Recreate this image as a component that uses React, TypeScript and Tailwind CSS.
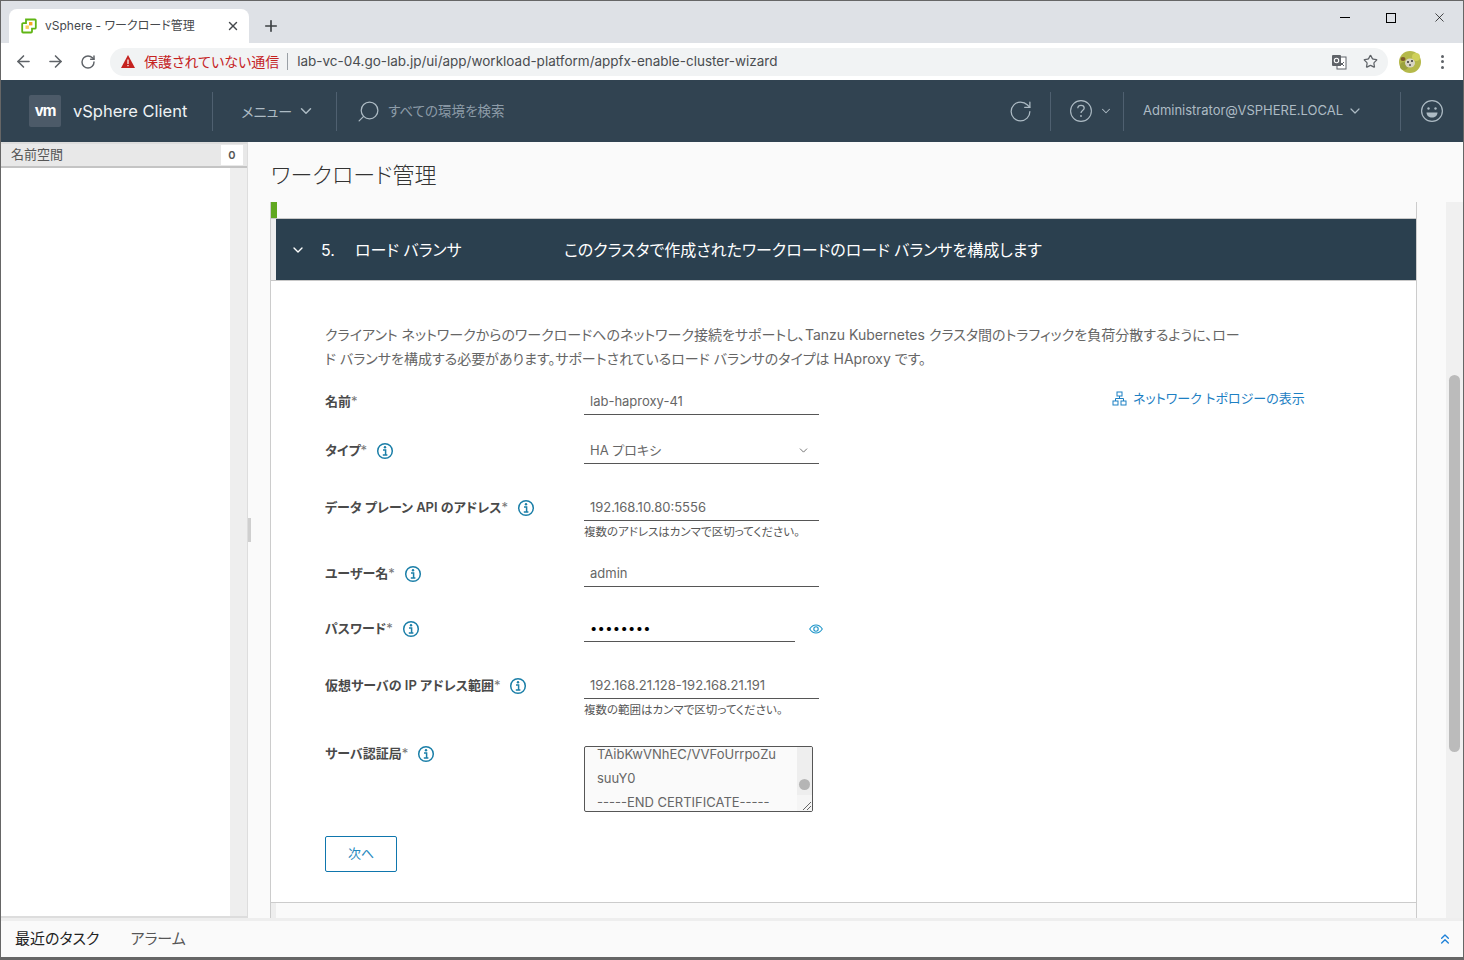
import React from 'react';
import { ArrowLeft, ArrowRight, ChevronDown, ChevronsUp, Plus, RotateCw, Search, Star, X } from 'lucide-react';

const FONT = "[font-family:Inter,'Noto_Sans_CJK_JP',sans-serif] [font-feature-settings:'palt']";

const InfoIcon = () => (
  <svg width="18" height="18" viewBox="0 0 18 18" fill="none" className="shrink-0">
    <circle cx="9" cy="9" r="7.3" stroke="#1b7fa8" strokeWidth="1.5" />
    <circle cx="9" cy="5.3" r="1.2" fill="#1b7fa8" />
    <path d="M7 8h2.6v4.6M6.8 13h4.6" stroke="#1b7fa8" strokeWidth="1.5" />
  </svg>
);

const Favicon = () => (
  <svg width="16" height="16" viewBox="0 0 16 16" fill="none" className="shrink-0">
    <path d="M5 1.5h9a.8.8 0 0 1 .8.8v7.4a1 1 0 0 1-1 1H11v2.8a1 1 0 0 1-1 1H2a.8.8 0 0 1-.8-.8V6.2a1 1 0 0 1 1-1H5V1.5z" stroke="#60b515" strokeWidth="1.8" />
    <rect x="8" y="4" width="3.4" height="3.4" fill="#f5a623" />
    <rect x="4.5" y="7.5" width="3.4" height="3.4" fill="#f8cf5b" />
  </svg>
);

const Avatar = () => (
  <svg width="22" height="22" viewBox="0 0 22 22">
    <circle cx="11" cy="11" r="11" fill="#b5b94a" />
    <circle cx="17" cy="6" r="4" fill="#cfd05a" />
    <circle cx="5" cy="15" r="4" fill="#9aa23e" />
    <ellipse cx="4" cy="8" rx="2.5" ry="2" fill="#7d5a2c" />
    <ellipse cx="11" cy="12" rx="5" ry="4.5" fill="#d8d5c4" />
    <circle cx="9" cy="11" r="1" fill="#333" />
    <circle cx="13" cy="10" r="1" fill="#333" />
    <circle cx="11" cy="14" r="1" fill="#555" />
  </svg>
);

const TranslateIcon = () => (
  <svg width="16" height="16" viewBox="0 0 16 16" className="shrink-0">
    <rect x="6" y="3" width="9" height="12" fill="#fff" stroke="#5f6368" />
    <rect x="1" y="1" width="9" height="11" rx="1" fill="#5f6368" />
    <circle cx="5.5" cy="6.5" r="2.2" fill="none" stroke="#fff" strokeWidth="1.1" />
    <path d="M9 8l4 4M13 8l-4 4" stroke="#5f6368" strokeWidth="1" />
  </svg>
);

const TopologyIcon = () => (
  <svg width="15" height="15" viewBox="0 0 15 15" fill="none" stroke="#1d80c3" className="shrink-0">
    <rect x="5" y="1" width="5" height="4" />
    <rect x="1" y="10" width="5" height="4" />
    <rect x="9" y="10" width="5" height="4" />
    <path d="M7.5 5v2.5M3.5 10V7.5h8V10" />
  </svg>
);

const EyeIcon = () => (
  <svg width="14" height="10" viewBox="0 0 14 10" fill="none" stroke="#1d95c9" strokeWidth="1.1">
    <path d="M.7 5C2.3 2.4 4.5 1 7 1s4.7 1.4 6.3 4C11.7 7.6 9.5 9 7 9S2.3 7.6.7 5z" />
    <circle cx="7" cy="5" r="2.2" />
  </svg>
);

const Label = ({ text, info, width }: { text: string; info?: boolean; width?: string }) => (
  <div className={`flex w-[259px] shrink-0 items-center gap-[9px] text-[13px] font-semibold text-[#4a4a4a] ${width ?? ''}`}>
    <span>
      {text}
      <span className="font-normal text-[#777]">*</span>
    </span>
    {info && <InfoIcon />}
  </div>
);

const Field = ({ value, help }: { value: string; help?: string }) => (
  <div className="w-[235px] shrink-0">
    <div className="flex h-[26px] items-center border-b border-[#565656] pl-[6px] text-[13px] text-[#666]">{value}</div>
    {help && <div className="mt-[4px] text-[11.5px] leading-[14px] text-[#565656]">{help}</div>}
  </div>
);

export default function App() {
  return (
    <div className={`flex h-[960px] w-[1464px] flex-col overflow-hidden border-x border-t border-[#666] bg-white ${FONT}`}>
      {/* browser tabs */}
      <div className="flex h-[42px] shrink-0 items-end bg-[#dee1e6] pl-[8px]">
        <div className="flex h-[34px] w-[240px] items-center rounded-t-[8px] bg-white pl-[12px] pr-[9px]">
          <Favicon />
          <span className="ml-[8px] flex-1 text-[12px] text-[#45484c]">vSphere - ワークロード管理</span>
          <X size={14} strokeWidth={2.4} className="text-[#45484c]" />
        </div>
        <Plus size={18} strokeWidth={2.2} className="mb-[8px] ml-[13px] text-[#3c4043]" />
        <div className="flex-1" />
        <div className="mb-[18px] flex items-center gap-[31px] pr-[16px]">
          <div className="h-px w-[10px] bg-black" />
          <div className="mx-[5px] h-[10px] w-[10px] border border-black" />
          <X size={15} strokeWidth={1.1} className="text-black" />
        </div>
      </div>

      {/* address bar */}
      <div className="flex h-[37px] shrink-0 items-center bg-white pl-[13px]">
        <ArrowLeft size={19} strokeWidth={2} className="text-[#5f6368]" />
        <ArrowRight size={19} strokeWidth={2} className="ml-[13px] text-[#5f6368]" />
        <RotateCw size={16} strokeWidth={2.2} className="ml-[15px] text-[#5f6368]" />
        <div className="ml-[14px] flex h-[28px] w-[1278px] items-center rounded-full bg-[#f1f3f4] pl-[11px] pr-[10px] text-[14px]">
          <svg width="14" height="13" viewBox="0 0 14 13" className="shrink-0">
            <path d="M7 0l7 13H0z" fill="#c5221f" />
            <path d="M6.4 4.5h1.2v4.5H6.4zM6.4 10h1.2v1.2H6.4z" fill="#fff" />
          </svg>
          <span className="ml-[9px] text-[#c5221f]">保護されていない通信</span>
          <div className="ml-[8px] h-[17px] w-px bg-[#9aa0a6]" />
          <span className="ml-[9px] text-[13.5px] text-[#4a4d50]">lab-vc-04.go-lab.jp/ui/app/workload-platform/appfx-enable-cluster-wizard</span>
          <div className="flex-1" />
          <TranslateIcon />
          <Star size={15} strokeWidth={2} className="ml-[16px] mr-[0px] text-[#5f6368]" />
        </div>
        <div className="ml-[11px]">
          <Avatar />
        </div>
        <div className="ml-[20px] flex flex-col gap-[2.5px]">
          <div className="h-[3px] w-[3px] rounded-full bg-[#5f6368]" />
          <div className="h-[3px] w-[3px] rounded-full bg-[#5f6368]" />
          <div className="h-[3px] w-[3px] rounded-full bg-[#5f6368]" />
        </div>
      </div>

      {/* vSphere header */}
      <div className="flex h-[62px] shrink-0 items-center bg-[#314351] pl-[28px] text-[#adbbc4]">
        <div className="flex h-[32px] w-[32px] items-center justify-center rounded-[2px] bg-[#4c5a68] text-[15px] font-bold tracking-[-1px] text-white">vm</div>
        <span className="ml-[12px] text-[16.5px] text-[#eef2f4]">vSphere Client</span>
        <div className="ml-[25px] h-[39px] w-px bg-[#4f6070]" />
        <span className="ml-[28px] text-[14px]">メニュー</span>
        <ChevronDown size={18} strokeWidth={2} className="ml-[5px]" />
        <div className="ml-[21px] h-[39px] w-px bg-[#4f6070]" />
        <Search size={25} strokeWidth={1.2} className="ml-[19px] -scale-x-100" />
        <span className="ml-[7px] text-[13.5px] text-[#8d9ca8]">すべての環境を検索</span>
        <div className="flex-1" />
        <RotateCw size={25} strokeWidth={1.2} />
        <div className="ml-[17px] h-[39px] w-px bg-[#4f6070]" />
        <svg width="24" height="24" viewBox="0 0 24 24" fill="none" stroke="#adbbc4" strokeWidth="1.1" className="ml-[18px]">
          <circle cx="12" cy="12" r="10.4" />
          <path d="M8.8 9.3c0-1.9 1.4-3 3.2-3s3.2 1.1 3.2 2.8c0 2.5-3.2 2.5-3.2 5" strokeWidth="1.3" />
          <circle cx="12" cy="17" r=".9" fill="#adbbc4" stroke="none" />
        </svg>
        <ChevronDown size={14} strokeWidth={1.8} className="ml-[6px]" />
        <div className="ml-[10px] h-[39px] w-px bg-[#4f6070]" />
        <span className="ml-[19px] text-[13px]">Administrator@VSPHERE.LOCAL</span>
        <ChevronDown size={16} strokeWidth={1.8} className="ml-[4px]" />
        <div className="ml-[37px] h-[39px] w-px bg-[#4f6070]" />
        <svg width="24" height="24" viewBox="0 0 24 24" fill="none" stroke="#adbbc4" strokeWidth="1.2" className="ml-[19px] mr-[19px]">
          <circle cx="12" cy="12" r="10.4" />
          <circle cx="8.5" cy="9.5" r="1.2" fill="#adbbc4" stroke="none" />
          <circle cx="15.5" cy="9.5" r="1.2" fill="#adbbc4" stroke="none" />
          <path d="M6.5 13.5h11c0 3-2.5 5-5.5 5s-5.5-2-5.5-5z" fill="#adbbc4" stroke="none" />
        </svg>
      </div>

      <div className="flex min-h-0 flex-1 bg-[#fafafa]">
        {/* namespace sidebar */}
        <div className="flex w-[247px] shrink-0 flex-col border-r border-[#ddd]">
          <div className="flex h-[26px] shrink-0 items-center justify-between border-y-2 border-t-[#dcdcdc] border-b-[#c4c4c4] bg-[#e8e8e8] pl-[10px] pr-[4px]">
            <span className="text-[13px] text-[#565656]">名前空間</span>
            <span className="flex h-[20px] w-[22px] items-center justify-center bg-white text-[11px] font-semibold text-[#565656]">0</span>
          </div>
          <div className="flex min-h-0 flex-1 border-b-2 border-[#ddd]">
            <div className="flex-1 bg-white" />
            <div className="w-[17px] bg-[#eeeeee]" />
          </div>
        </div>
        {/* splitter */}
        <div className="flex w-[22px] shrink-0 items-center">
          <div className="h-[24px] w-[3px] bg-[#cfcfcf]" />
        </div>

        {/* wizard */}
        <div className="flex min-w-0 flex-1 flex-col">
          <h1 className="ml-[1px] flex h-[60px] shrink-0 items-center pt-[6px] text-[22px] font-light text-[#333]">ワークロード管理</h1>
          <div className="flex min-h-0 flex-1">
            <div className="flex w-[1147px] shrink-0 flex-col overflow-hidden border-x border-[#ccc]">
              <div className="h-[16px] shrink-0">
                <div className="h-full w-[6px] bg-[#60a820]" />
              </div>
              <div className="flex h-[63px] shrink-0 border-y border-[#c8c8c8] bg-[#eeeeee] pl-[5px]">
                <div className="flex flex-1 items-center bg-[#2b404f] pl-[14px] text-[16px] text-white">
                  <ChevronDown size={16} strokeWidth={2} />
                  <span className="ml-[15px] w-[34px]">5.</span>
                  <span className="w-[209px]">ロード バランサ</span>
                  <span>このクラスタで作成されたワークロードのロード バランサを構成します</span>
                </div>
              </div>

              <div className="flex h-[621px] shrink-0 flex-col bg-white pl-[54px]">
                <p className="mt-[42px] text-[14px] leading-[24px] text-[#666]">
                  クライアント ネットワークからのワークロードへのネットワーク接続をサポートし、Tanzu Kubernetes クラスタ間のトラフィックを負荷分散するように、ロー
                  <br />
                  ド バランサを構成する必要があります。サポートされているロード バランサのタイプは HAproxy です。
                </p>
                <div className="mt-[18px] flex items-start">
                  <div className="flex items-center">
                    <Label text="名前" />
                    <Field value="lab-haproxy-41" />
                  </div>
                  <a className="ml-[293px] flex items-center gap-[6px] text-[13px] text-[#1d80c3]">
                    <TopologyIcon />
                    ネットワーク トポロジーの表示
                  </a>
                </div>
                <div className="mt-[23px] flex items-center">
                  <Label text="タイプ" info />
                  <div className="flex h-[26px] w-[235px] items-center justify-between border-b border-[#565656] pl-[6px] pr-[9px] text-[13px] text-[#666]">
                    HA プロキシ
                    <ChevronDown size={13} strokeWidth={1.5} className="text-[#565656]" />
                  </div>
                </div>
                <div className="mt-[31px] flex items-start">
                  <div className="flex h-[26px] items-center">
                    <Label text="データ プレーン API のアドレス" info />
                  </div>
                  <Field value="192.168.10.80:5556" help="複数のアドレスはカンマで区切ってください。" />
                </div>
                <div className="mt-[22px] flex items-center">
                  <Label text="ユーザー名" info />
                  <Field value="admin" />
                </div>
                <div className="mt-[29px] flex items-center">
                  <Label text="パスワード" info />
                  <div className="flex w-[240px] shrink-0 items-center">
                    <div className="flex h-[26px] w-[211px] items-center border-b border-[#565656] pl-[6px] text-[13px] tracking-[0.3px] text-black">••••••••</div>
                    <span className="ml-[14px]">
                      <EyeIcon />
                    </span>
                  </div>
                </div>
                <div className="mt-[31px] flex items-start">
                  <div className="flex h-[26px] items-center">
                    <Label text="仮想サーバの IP アドレス範囲" info />
                  </div>
                  <Field value="192.168.21.128-192.168.21.191" help="複数の範囲はカンマで区切ってください。" />
                </div>
                <div className="mt-[29px] flex items-start">
                  <div className="flex h-[16px] items-center">
                    <Label text="サーバ認証局" info />
                  </div>
                  <div className="flex h-[66px] w-[229px] overflow-hidden rounded-[2px] border border-[#565656] bg-[#fafafa]">
                    <div className="-mt-[5px] flex-1 pl-[12px] text-[13px] leading-[24px] text-[#666]">
                      <div>TAibKwVNhEC/VVFoUrrpoZu</div>
                      <div>suuY0</div>
                      <div>-----END CERTIFICATE-----</div>
                    </div>
                    <div className="flex w-[15px] flex-col items-center justify-end bg-[#eeeeee]">
                      <div className="mb-[5px] h-[11px] w-[11px] rounded-full bg-[#b5b5b5]" />
                      <svg width="15" height="16" viewBox="0 0 15 16" className="bg-[#f5f5f5]">
                        <path d="M6 15l8-8M10 15l4-4" stroke="#666" strokeWidth="1" />
                      </svg>
                    </div>
                  </div>
                </div>
                <button className="mt-[24px] h-[36px] w-[72px] rounded-[2px] border border-[#0f76ad] text-[13px] text-[#2588bd]">次へ</button>
              </div>

              <div className="flex min-h-0 flex-1 border-t border-[#ccc] bg-[#eeeeee] pl-[5px]">
                <div className="flex-1 bg-[#fafafa]" />
              </div>
            </div>
            {/* page scrollbar */}
            <div className="ml-[29px] flex w-[17px] shrink-0 flex-col bg-[#f0f0f0] pl-[3px] pr-[3px] pt-[173px]">
              <div className="h-[377px] w-[11px] rounded-full bg-[#bbbbbb]" />
            </div>
          </div>
        </div>
      </div>

      {/* bottom tabs */}
      <div className="flex h-[42px] shrink-0 items-center border-t-[3px] border-b-[3px] border-t-[#eeeeee] border-b-[#666] bg-[#fafafa] pl-[14px] pr-[10px] text-[15px]">
        <span className="text-[#222]">最近のタスク</span>
        <span className="ml-[31px] text-[#565656]">アラーム</span>
        <div className="flex-1" />
        <ChevronsUp size={16} strokeWidth={2} className="text-[#1d80d8]" />
      </div>
    </div>
  );
}
